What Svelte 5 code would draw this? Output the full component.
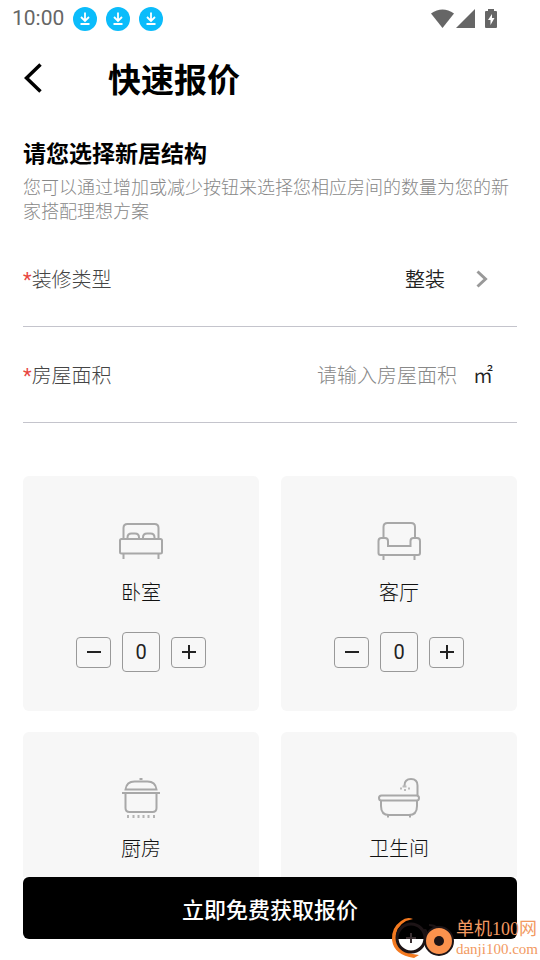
<script lang="ts">
    let area = $state('');
    let rooms = $state([
        { id: 'bedroom', name: '卧室', count: 0 },
        { id: 'living', name: '客厅', count: 0 },
        { id: 'kitchen', name: '厨房', count: 0 },
        { id: 'bathroom', name: '卫生间', count: 0 },
    ]);
</script>

<div class="page">
    <div class="status-bar">
        <span class="time">10:00</span>
        {#each { length: 3 }}
            <svg class="download" viewBox="0 0 24 24" aria-hidden="true">
                <circle cx="12" cy="12" r="12" fill="#0bbcfb" />
                <path d="M12 5.5v8M8 10l4 4 4-4M7.5 17h9" fill="none" stroke="#fff" stroke-width="1.8" />
            </svg>
        {/each}
        <svg class="signals" viewBox="0 0 68 20" aria-hidden="true">
            <path d="M0 4.5Q11.5-3.5 23 4.5L11.5 19Z" />
            <path d="M44 0v19H25Z" />
            <path
                fill-rule="evenodd"
                d="M57 0h6v2h2a1 1 0 0 1 1 1v15a1 1 0 0 1-1 1H55a1 1 0 0 1-1-1V3a1 1 0 0 1 1-1h2ZM61 5l-4 6h2.5v5l4-7H61Z"
            />
        </svg>
    </div>

    <header>
        <button class="back" aria-label="返回">
            <svg viewBox="0 0 18 30" aria-hidden="true">
                <path d="M16.5 1.5 2.5 15l14 13.5" />
            </svg>
        </button>
        <h1>快速报价</h1>
    </header>

    <main>
        <h2>请您选择新居结构</h2>
        <p class="intro">您可以通过增加或减少按钮来选择您相应房间的数量为您的新家搭配理想方案</p>

        <div class="field">
            <label for="decoration"><span class="required">*</span>装修类型</label>
            <select id="decoration">
                <option>整装</option>
            </select>
            <svg class="chevron" viewBox="0 0 12 18" aria-hidden="true">
                <path d="M1.5 1.5 9.5 9l-8 7.5" />
            </svg>
        </div>
        <div class="field">
            <label for="area"><span class="required">*</span>房屋面积</label>
            <input id="area" type="text" inputmode="decimal" placeholder="请输入房屋面积" bind:value={area} />
            <span class="unit">㎡</span>
        </div>

        <div class="rooms">
            {#each rooms as room (room.id)}
                <section class="room">
                    <svg class="room-icon" viewBox="0 0 48 44" aria-hidden="true">
                        {#if room.id === 'bedroom'}
                            <path d="M6.5 18V7q0-4 4-4h27q4 0 4 4v11" />
                            <rect x="3" y="18" width="42" height="14.5" rx="1.5" />
                            <path d="M10.5 17.5v-1q0-4 4-4H18q4 0 4 4v1M26 17.5v-1q0-4 4-4h3.5q4 0 4 4v1" />
                            <path d="M6.5 33v5M41.5 33v5" />
                        {:else if room.id === 'living'}
                            <path d="M8.5 17V6q0-4 4-4H36q4 0 4 4v11" />
                            <path
                                d="M13 25h22.5v-5q0-3 3-3H42q3 0 3 3v12q0 2-2 2H5.5q-2 0-2-2V20q0-3 3-3H10q3 0 3 3Z"
                            />
                            <path d="M8.5 34v5M39.5 34v5" />
                        {:else if room.id === 'kitchen'}
                            <path d="M8.5 12.5q1-8 9-8h13q8 0 9 8Z" />
                            <path d="M5 16h38" />
                            <path d="M8.5 16v15q0 4 4 4h23q4 0 4-4V16" />
                            <path d="M22.5 2h3" />
                            <path class="flames" d="M11 38v3M16.5 38v3M21.5 38v3M26.5 38v3M31.5 38v3M37 38v3" />
                        {:else}
                            <rect x="4" y="18.5" width="40" height="5" rx="2.5" />
                            <path d="M6 24v5q0 9 8 9h20q8 0 8-9v-5" />
                            <path d="M42.5 18V8.5Q42.5 2 36 2t-6.5 6.5v1" />
                            <path d="M13 38v2.5M35 38v2.5" />
                            <path class="drops" d="M25 11.5h2M29 13h2M33 11.5h2M27.5 9.5h4" />
                        {/if}
                    </svg>
                    <h3>{room.name}</h3>
                    <div class="stepper">
                        <button
                            aria-label="减少{room.name}"
                            onclick={() => (room.count = Math.max(0, room.count - 1))}
                        >
                            <svg viewBox="0 0 14 14" aria-hidden="true"><path d="M0 7h14" /></svg>
                        </button>
                        <output>{room.count}</output>
                        <button aria-label="增加{room.name}" onclick={() => room.count++}>
                            <svg viewBox="0 0 14 14" aria-hidden="true"><path d="M0 7h14M7 0v14" /></svg>
                        </button>
                    </div>
                </section>
            {/each}
        </div>
    </main>

    <footer>
        <button class="submit">立即免费获取报价</button>
    </footer>

    <div class="watermark">
        <svg viewBox="0 0 66 44" aria-hidden="true">
            <path d="M23 3Q17 0 11 5 1 12 2 24q2 15 22 18l5-3Q8 37 6 23 5 11 16 5Z" fill="#f47a20" />
            <circle cx="21" cy="22" r="14" fill="none" stroke="#1d1416" stroke-width="3" />
            <path d="M16 22h10M21 17v10" stroke="#3a3032" stroke-width="2" />
            <path d="M33 15q4-3 3 3M39 9q5 0 9 3" fill="none" stroke="#1d1416" stroke-width="2" />
            <circle cx="49" cy="25" r="14" fill="#fb924d" stroke="#1d1416" stroke-width="2" />
            <circle cx="49" cy="25" r="5" fill="#1d1416" />
        </svg>
        <div class="watermark-text">
            <span class="site">单机100网</span>
            <span class="domain">danji100.com</span>
        </div>
    </div>
</div>

<style>
    :global(body) {
        margin: 0;
        background: #fff;
    }

    .page {
        position: relative;
        display: flex;
        flex-direction: column;
        height: 100vh;
        overflow: hidden;
        color: #222;
        font-family: 'Noto Sans CJK SC', sans-serif;
        font-weight: 300;
    }

    button,
    input,
    select {
        margin: 0;
        padding: 0;
        border: none;
        background: none;
        color: inherit;
        font: inherit;
    }

    button {
        cursor: pointer;
    }

    h1,
    h2,
    h3,
    p {
        margin: 0;
    }

    .status-bar {
        display: flex;
        align-items: center;
        gap: 9px;
        height: 37px;
        padding: 0 41px 0 12px;
    }

    .time {
        color: #666;
        font: 400 21px/37px Roboto, sans-serif;
    }

    .download {
        width: 24px;
        height: 24px;
    }

    .signals {
        width: 68px;
        height: 20px;
        margin-left: auto;
        fill: #666;
    }

    header {
        display: flex;
        align-items: center;
        gap: 66px;
        height: 82px;
        padding: 0 24px;
    }

    .back svg {
        display: block;
        width: 18px;
        height: 30px;
        fill: none;
        stroke: #000;
        stroke-width: 3.5;
    }

    h1 {
        color: #000;
        font-size: 33px;
        font-weight: 700;
        line-height: 48px;
    }

    main {
        flex: 1;
        min-height: 0;
        padding: 17px 23px 0;
        overflow-y: auto;
        scrollbar-width: none;
    }

    h2 {
        color: #000;
        font-size: 23px;
        font-weight: 700;
        line-height: 32px;
    }

    .intro {
        padding-top: 6px;
        color: #888;
        font-size: 18px;
        line-height: 24px;
    }

    .field {
        display: flex;
        align-items: center;
        height: 95px;
        padding-right: 24px;
        border-bottom: 1px solid #c4c4cc;
        font-size: 20px;
    }

    .intro + .field {
        margin-top: 9px;
    }

    label {
        color: #444;
        white-space: nowrap;
    }

    .required {
        color: #e8473f;
        font-family: Roboto, sans-serif;
        font-weight: 400;
    }

    select {
        margin-left: auto;
        appearance: none;
        font-weight: 350;
    }

    .chevron {
        width: 12px;
        height: 18px;
        margin: 0 5px 0 31px;
        fill: none;
        stroke: #999;
        stroke-width: 3;
    }

    input {
        flex: 1;
        min-width: 0;
        outline: none;
        text-align: right;
    }

    input::placeholder {
        color: #888;
        opacity: 1;
    }

    .unit {
        margin-left: 16px;
        font-weight: 350;
    }

    .rooms {
        display: grid;
        grid-template-columns: 1fr 1fr;
        gap: 21px 22px;
        padding: 53px 0 24px;
    }

    .room {
        display: flex;
        flex-direction: column;
        align-items: center;
        height: 235px;
        border-radius: 6px;
        background: #f7f7f7;
    }

    .room-icon {
        width: 48px;
        height: 44px;
        margin-top: 45px;
        fill: none;
        stroke: #a8a8a8;
        stroke-width: 2;
    }

    .flames {
        stroke: #b4b4b4;
    }

    .drops {
        stroke: #bbb;
    }

    h3 {
        padding-top: 12px;
        color: #111;
        font-size: 20px;
        font-weight: 300;
        line-height: 30px;
    }

    .stepper {
        display: flex;
        align-items: center;
        gap: 11px;
        padding-top: 25px;
    }

    .stepper button,
    .stepper output {
        display: flex;
        box-sizing: border-box;
        align-items: center;
        justify-content: center;
        width: 35px;
        height: 31px;
        border: 1px solid #999;
        border-radius: 4px;
    }

    .stepper output {
        width: 38px;
        height: 40px;
        font: 400 20px/36px Roboto, sans-serif;
    }

    .stepper svg {
        width: 14px;
        height: 14px;
        stroke: #222;
        stroke-width: 2;
    }

    footer {
        padding: 0 23px 21px;
    }

    .submit {
        display: block;
        width: 100%;
        height: 62px;
        border-radius: 6px;
        background: #000;
        color: #fff;
        font-size: 22px;
        font-weight: 500;
    }

    .watermark {
        position: absolute;
        right: 2px;
        bottom: 0;
        display: flex;
        align-items: center;
        pointer-events: none;
    }

    .watermark > svg {
        width: 66px;
        height: 44px;
    }

    .watermark-text {
        display: flex;
        flex-direction: column;
        color: #f29a62;
        font-family: 'Liberation Serif', 'Noto Sans CJK SC', serif;
        font-weight: 400;
    }

    .site {
        font-size: 18px;
        line-height: 21px;
    }

    .domain {
        font-size: 15px;
        line-height: 18px;
    }
</style>
